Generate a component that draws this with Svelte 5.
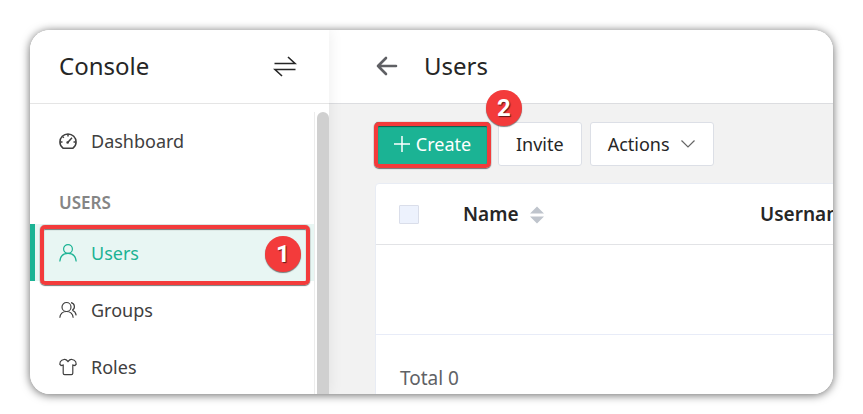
<script>
  const before = [{ label: 'Dashboard', icon: 'dashboard' }];
  const group = [
    { label: 'Users', icon: 'user', active: true },
    { label: 'Groups', icon: 'group' },
    { label: 'Roles', icon: 'shirt' }
  ];
  let allSelected = $state(false);
</script>

{#snippet icon(name)}
  <svg class="icon" viewBox="0 0 18 18" aria-hidden="true">
    {#if name === 'dashboard'}
      <path class="bold" d="M4 16.2C2 14.600.9 12.500.9 10a8.100 8.100 0 0 1 16.200 0c0 2.500-1.100 4.600-3.100 6.200z" />
      <path class="bold" d="M9 2v2.500M3.800 4.800l1 1M1 10h2.500M14.500 10H17M8.500 10.700l4.500-5" />
      <circle cx="8.600" cy="10.500" r=".7" />
    {:else if name === 'user'}
      <circle cx="9" cy="5" r="4.400" />
      <path d="M.8 17.500C1.200 12.500 4.300 9.400 9 9.400s7.800 3.100 8.200 8.100" />
    {:else if name === 'group'}
      <circle cx="7.500" cy="6" r="4.500" />
      <path d="M.8 16.800c.4-3.900 3-6.300 6.700-6.300s6.300 2.400 6.700 6.300M12 1.600c3.800.6 4.700 5.600 1.300 7.700M13.300 9.300c2.300.9 3.600 2.800 3.900 5" />
    {:else}
      <path d="M5.700 1.300 2.800 2.200Q.8 3.200.8 6.200l1.300 1.300 2.100-.4v8.200q0 1.400 1.400 1.400h6.800q1.400 0 1.400-1.400V7.100l2.100.4 1.300-1.300q0-3-2-4l-2.900-.9c-1 0-2 .6-3.300 2.200C7.700 1.900 6.700 1.300 5.700 1.300z" />
    {/if}
  </svg>
{/snippet}

{#snippet item(entry)}
  <li>
    <a href="#{entry.label.toLowerCase()}" class:active={entry.active} aria-current={entry.active ? 'page' : undefined}>
      {@render icon(entry.icon)}
      <span>{entry.label}</span>
    </a>
    {#if entry.active}
      <div class="callout nav-callout"><span class="badge">1</span></div>
    {/if}
  </li>
{/snippet}

<div class="page">
  <div class="window">
    <aside>
      <header>
        <span class="title">Console</span>
        <button class="plain" aria-label="Switch">
          <svg width="24" height="24" viewBox="0 0 24 24" aria-hidden="true">
            <path d="M1.500 9.500H22L15 3M22.500 15.500H2L9 22" />
          </svg>
        </button>
      </header>
      <div class="scroll">
        <nav aria-label="Console">
          <ul>{#each before as entry}{@render item(entry)}{/each}</ul>
          <h2>USERS</h2>
          <ul>{#each group as entry}{@render item(entry)}{/each}</ul>
        </nav>
        <div class="thumb"></div>
      </div>
    </aside>

    <main>
      <header>
        <button class="plain back" aria-label="Back">
          <svg width="22" height="20" viewBox="0 0 22 20" aria-hidden="true">
            <path d="M20 10H2M10 2 2 10l8 8" />
          </svg>
        </button>
        <h1 class="title">Users</h1>
      </header>
      <div class="content">
        <div class="toolbar">
          <div class="create-wrap">
            <button class="create">
              <svg width="16" height="16" viewBox="0 0 16 16" aria-hidden="true"><path d="M8 0v16M0 8h16" /></svg>
              Create
            </button>
            <div class="callout create-callout"><span class="badge">2</span></div>
          </div>
          <button class="btn">Invite</button>
          <button class="btn" aria-haspopup="menu">
            Actions
            <svg width="16" height="8" viewBox="0 0 16 8" aria-hidden="true"><path d="M1.500.5 8 7 14.500.5" /></svg>
          </button>
        </div>

        <section>
          <table>
            <thead>
              <tr>
                <th class="check"><input type="checkbox" aria-label="Select all" bind:checked={allSelected} /></th>
                <th class="name">
                  <button class="sort">
                    Name
                    <svg width="14" height="18" viewBox="0 0 14 18" aria-hidden="true"><path d="M0 7.500 7 .5l7 7zM0 10.500l7 7 7-7z" /></svg>
                  </button>
                </th>
                <th class="username">Username</th>
              </tr>
            </thead>
            <tbody><tr><td colspan="3"></td></tr></tbody>
          </table>
          <footer>Total 0</footer>
        </section>
      </div>
    </main>
  </div>
</div>

<style>
  :global(body) { margin: 0; background: #fff; }
  * { box-sizing: border-box; }
  .page {
    height: 100vh;
    padding: 30px 30px 20px;
    font-family: "Noto Sans", sans-serif;
    font-size: 18px;
    color: #262626;
  }
  .window {
    display: flex;
    height: 100%;
    overflow: hidden;
    border-radius: 20px;
    background: #fff;
    box-shadow: 0 1px 10px rgba(0, 0, 0, 0.6);
  }
  button { font: inherit; color: inherit; cursor: pointer; }
  svg { fill: none; stroke: currentColor; flex: none; display: block; }
  header {
    display: flex;
    align-items: center;
    height: 74px;
    padding-bottom: 2px;
    flex: none;
    border-bottom: 1px solid #e5e5e5;
    background: #fff;
  }
  .title { margin: 0; font-size: 24px; font-weight: 400; line-height: 32px; }
  .plain { padding: 0; border: 0; background: none; }

  aside {
    position: relative;
    z-index: 1;
    display: flex;
    flex-direction: column;
    flex: 0 0 299px;
    box-shadow: 0 0 14px rgba(0, 0, 0, 0.08);
    background: #fff;
  }
  aside header { justify-content: space-between; padding-left: 29px; padding-right: 32px; }
  aside header svg { stroke-width: 1.600; }
  .scroll { display: flex; flex: 1; min-height: 0; padding-top: 8px; }
  nav { flex: 1; min-width: 0; border-right: 1px solid #ececec; margin-right: 2px; }
  .thumb { width: 12px; background: #d0d0d0; border-radius: 6px 6px 0 0; }
  ul { list-style: none; margin: 0; padding: 0; }
  li { position: relative; }
  nav a {
    display: flex;
    align-items: center;
    gap: 14px;
    height: 57px;
    padding-left: 29px;
    color: #404040;
    text-decoration: none;
  }
  nav a.active {
    padding-left: 24px;
    border-left: 5px solid #1bb394;
    background: #e8f6f3;
    color: #1bb394;
  }
  .icon { width: 18px; height: 18px; stroke-width: 1.200; }
  .icon .bold { stroke-width: 1.500; }
  h2 {
    height: 55px;
    margin: 0;
    padding: 10px 0 0 29px;
    font-size: 17px;
    line-height: 48px;
    font-weight: 600;
    color: #858585;
  }

  .callout {
    position: absolute;
    border: 4px solid #f33b3b;
    border-radius: 5px;
    box-shadow: 0 0 1px 0 #555, 0 1px 1px rgba(0, 0, 0, 0.5), inset 0 1px 1px rgba(0, 0, 0, 0.5);
    pointer-events: none;
  }
  .nav-callout { inset: 1px 4px -4px 10px; }
  .create-callout { inset: 0 -1px -2px; }
  .badge {
    position: absolute;
    width: 36px;
    height: 36px;
    border-radius: 50%;
    background: #f33b3b;
    box-shadow: 0 1px 1px rgba(0, 0, 0, 0.5);
    color: #fff;
    font: bold 24px/36px Roboto, sans-serif;
    text-align: center;
    text-shadow: 1px 1px 1px rgba(0, 0, 0, 0.6);
  }
  .nav-callout .badge { right: 5px; top: 7px; }
  .create-callout .badge { right: -35px; top: -36px; }

  main { display: flex; flex-direction: column; flex: 1; min-width: 0; background: #f2f2f2; }
  main header { gap: 26px; padding-left: 47px; border-color: #dcdde0; }
  .back { color: #5f6064; }
  .back svg { stroke-width: 2.600; stroke-linecap: round; stroke-linejoin: round; }
  .content { flex: 1; min-height: 0; padding: 18px 0 0 46px; }
  .toolbar { display: flex; gap: 8px; }
  .toolbar button {
    display: flex;
    align-items: center;
    justify-content: center;
    height: 44px;
    border: 1px solid #dcdfe6;
    border-radius: 3px;
    background: #fff;
    padding: 0 17px;
    gap: 10px;
  }
  .create-wrap { position: relative; width: 115px; }
  .toolbar .create { width: 100%; gap: 6px; background: #1bb394; border-color: #1bb394; color: #fff; }
  .create svg { stroke-width: 1.500; }
  .btn svg { color: #666; stroke-width: 1.200; }

  section {
    margin-top: 17px;
    width: 900px;
    border: 1px solid #e8ecf4;
    border-radius: 4px 0 0 0;
    background: #fff;
  }
  table { width: 100%; table-layout: fixed; border-collapse: separate; border-spacing: 0; }
  th {
    height: 61px;
    padding: 0 12px;
    border-bottom: 1px solid #e2e3e6;
    text-align: left;
    font-size: 19px;
    font-weight: 600;
  }
  .check { width: 75px; padding-left: 23px; }
  .name { width: 297px; }
  input {
    appearance: none;
    display: block;
    width: 20px;
    height: 19px;
    margin: 0;
    border: 1px solid #dadeea;
    border-radius: 1px;
    background: #edf2fd;
  }
  input:checked { background: #1bb394; }
  .sort { display: flex; align-items: center; gap: 11px; padding: 0; border: 0; background: none; }
  .sort svg { fill: #bfc4cc; stroke: none; margin-top: 2px; }
  td { height: 90px; border-bottom: 1px solid #e8ecf8; }
  footer { padding: 29px 24px; font-size: 19px; line-height: 28px; color: #606266; }
</style>
